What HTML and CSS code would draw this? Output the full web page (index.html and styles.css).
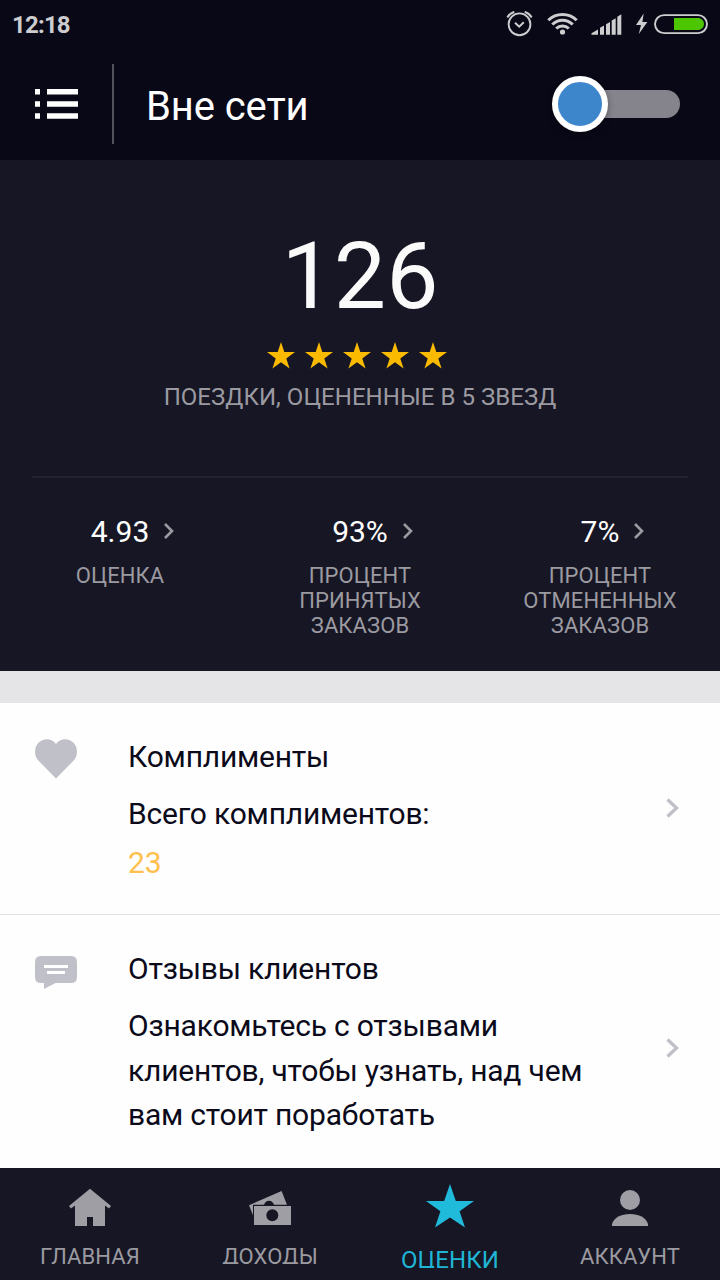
FILE: index.html
```html
<!DOCTYPE html>
<html lang="ru">
<head>
<meta charset="utf-8">
<title>Оценки</title>
<link rel="stylesheet" href="styles.css">
</head>
<body>
<div class="app">
  <div class="status">
    <span class="clock">12:18</span>
    <svg class="status-icons" width="206" height="48" viewBox="0 0 206 48">
      <g fill="none" stroke="#cdcdd0" stroke-linecap="round">
        <circle cx="19.5" cy="24.3" r="10.9" stroke-width="1.9"/>
        <path d="M15 22.800l4.200 3.900 4.600-4.400" stroke-width="2" stroke-linecap="butt"/>
        <path d="M7.900 16.600Q10 13.400 13.400 12.200M31.100 16.600Q29 13.400 25.600 12.200" stroke-width="2.200"/>
      </g>
      <g fill="none" stroke="#cdcdd0" stroke-width="3">
        <path d="M48.300 20.300a20 20 0 0 1 28.400 0"/>
        <path d="M52.300 24.500a14.300 14.300 0 0 1 20.400 0"/>
        <path d="M56.200 28.500a9 9 0 0 1 12.600 0"/>
      </g>
      <circle cx="62.500" cy="32" r="2.600" fill="#cdcdd0"/>
      <path d="M91.500 34.700v-1.500l6.500-3.600v5.100zM100 34.700v-6.900l4-2.200v9.100zM106 34.700V24.200l4-2.200v12.700zM111.700 34.700V20.500l4-2.200v16.400zM117.300 34.700V16.700l4-2.400v20.400z" fill="#cdcdd0"/>
      <path d="M143.700 13.600L136 25.100h5l-2.200 9L147.400 22h-5z" fill="#cdcdd0"/>
      <rect x="155" y="15.100" width="52" height="18" rx="9" fill="none" stroke="#cdcdd0" stroke-width="1.900"/>
      <path d="M174 18.100h25q5 1.400 5 6t-5 6h-25z" fill="#4bc600"/>
    </svg>
  </div>
  <header class="header">
    <div class="menu">
      <svg width="43" height="30" viewBox="0 0 43 30" fill="#fff"><path d="M0 0h5v5.500H0zM12 0h31v5.500H12zM0 12.200h5v5.500H0zM12 12.200h31v5.500H12zM0 24.200h5v5.500H0zM12 24.200h31v5.500H12z"/></svg>
    </div>
    <h1 class="title">Вне сети</h1>
    <div class="switch"><div class="knob"></div></div>
  </header>
  <section class="hero">
    <div class="score">126</div>
    <div class="stars">
      <svg viewBox="0 0 28 27"><path d="M14 0l3.300 10.100H28l-8.700 6.300 3.300 10.100L14 20.300l-8.600 6.200 3.300-10.100L0 10.100h10.700z"/></svg>
      <svg viewBox="0 0 28 27"><path d="M14 0l3.300 10.100H28l-8.700 6.300 3.300 10.100L14 20.300l-8.600 6.200 3.300-10.100L0 10.100h10.700z"/></svg>
      <svg viewBox="0 0 28 27"><path d="M14 0l3.300 10.100H28l-8.700 6.300 3.300 10.100L14 20.300l-8.600 6.200 3.300-10.100L0 10.100h10.700z"/></svg>
      <svg viewBox="0 0 28 27"><path d="M14 0l3.300 10.100H28l-8.700 6.300 3.300 10.100L14 20.300l-8.600 6.200 3.300-10.100L0 10.100h10.700z"/></svg>
      <svg viewBox="0 0 28 27"><path d="M14 0l3.300 10.100H28l-8.700 6.300 3.300 10.100L14 20.300l-8.600 6.200 3.300-10.100L0 10.100h10.700z"/></svg>
    </div>
    <div class="caption">ПОЕЗДКИ, ОЦЕНЕННЫЕ В 5 ЗВЕЗД</div>
    <div class="stats">
      <div class="stat">
        <div class="value">4.93<svg class="more" viewBox="0 0 10 16"><path d="M1 1l7 7-7 7"/></svg></div>
        <div class="label">ОЦЕНКА</div>
      </div>
      <div class="stat">
        <div class="value">93%<svg class="more" viewBox="0 0 10 16"><path d="M1 1l7 7-7 7"/></svg></div>
        <div class="label">ПРОЦЕНТ<br>ПРИНЯТЫХ<br>ЗАКАЗОВ</div>
      </div>
      <div class="stat">
        <div class="value">7%<svg class="more" viewBox="0 0 10 16"><path d="M1 1l7 7-7 7"/></svg></div>
        <div class="label">ПРОЦЕНТ<br>ОТМЕНЕННЫХ<br>ЗАКАЗОВ</div>
      </div>
    </div>
  </section>
  <main class="list">
    <article class="row compliments">
      <svg class="row-icon" width="42" height="40" viewBox="0 0 42 40"><path d="M21 39.500L3.600 21.800C-1 17-1.200 9 3.200 4 8-1.300 17-1.300 21 5c4-6.300 13-6.300 17.800-1 4.400 5 4.200 13-.400 17.800z" fill="#c0c0c8"/></svg>
      <div class="row-text">
        <h2>Комплименты</h2>
        <p>Всего комплиментов:</p>
        <p class="count">23</p>
      </div>
      <svg class="arrow" viewBox="0 0 13 20"><path d="M1.500 1.500L10.500 10l-9 8.500"/></svg>
    </article>
    <article class="row reviews">
      <svg class="row-icon" width="42" height="33" viewBox="0 0 42 33"><path d="M6 0h30q6 0 6 6v15q0 6-6 6H20.500L9 33v-6H6q-6 0-6-6V6q0-6 6-6z" fill="#c0c0c8"/><path d="M9 9h24v3H9zM12 15h18v3H12z" fill="#fff"/></svg>
      <div class="row-text">
        <h2>Отзывы клиентов</h2>
        <p>Ознакомьтесь с отзывами<br>клиентов, чтобы узнать, над чем<br>вам стоит поработать</p>
      </div>
      <svg class="arrow" viewBox="0 0 13 20"><path d="M1.500 1.500L10.500 10l-9 8.500"/></svg>
    </article>
  </main>
  <nav class="nav">
    <div class="tab">
      <svg viewBox="0 0 48 48"><path d="M24 4.800L45 22l-2 2.500-4-3V42H27v-9h-6v9H9V21.500l-4 3L3 22z"/></svg>
      <span>ГЛАВНАЯ</span>
    </div>
    <div class="tab income">
      <svg viewBox="0 0 48 48"><path d="M3 21.300L35.600 7l5.400 13.800H28q-1.500-4-5-4t-5 4H7v10.500z"/><path d="M8 22h37v19H8zM26.300 25.300a6 6 0 1 0 0 12 6 6 0 0 0 0-12z" fill-rule="evenodd"/></svg>
      <span>ДОХОДЫ</span>
    </div>
    <div class="tab active">
      <svg viewBox="0 0 48 48"><path d="M24 0l5.800 17H48L33.600 27.200 39 43.500 24 33.600 9 43.500l5.400-16.300L0 17h18.200z"/></svg>
      <span>ОЦЕНКИ</span>
    </div>
    <div class="tab">
      <svg viewBox="0 0 48 48"><circle cx="24" cy="16" r="10"/><path d="M6 42v-2C8 33.500 15 30 24 30s16 3.500 18 10v2z"/></svg>
      <span>АККАУНТ</span>
    </div>
  </nav>
</div>
</body>
</html>
```
FILE: styles.css
```css
* { box-sizing: border-box; margin: 0; padding: 0; }
body { font-family: Roboto, "Noto Sans", sans-serif; background: #fefefe; }
svg { display: block; flex: none; }
.app { width: 720px; height: 1280px; display: flex; flex-direction: column; overflow: hidden; }

.status { height: 48px; background: #090817; display: flex; justify-content: space-between; padding: 0 12px; }
.clock { font-size: 24px; font-weight: 700; line-height: 50px; letter-spacing: -0.8px; color: #cdcdd0; }
.status-icons { margin-right: 2px; overflow: visible; }

.header { height: 112px; background: #090817; display: flex; align-items: center; padding-right: 40px; }
.menu { width: 114px; height: 80px; border-right: 2px solid #53525d; display: flex; align-items: center; padding-left: 35px; }
.title { flex: 1; margin-left: 32px; padding-top: 6px; font-size: 40px; font-weight: 400; line-height: 48px; letter-spacing: -0.1px; color: #fff; }
.switch { width: 126px; height: 28px; border-radius: 14px; background: #85848d; display: flex; align-items: center; }
.knob { flex: none; width: 56px; height: 56px; margin-left: -2px; border-radius: 50%; border: 6px solid #fff; background: #3d86cb; box-shadow: 0 2px 6px rgba(0, 0, 0, .35); }

.hero { height: 511px; background: #171624; padding-top: 62px; text-align: center; }
.score { font-size: 93px; line-height: 110px; color: #fafafa; }
.stars { display: flex; justify-content: center; gap: 10px; padding: 9.500px 6px 0 0; }
.stars svg { width: 28px; height: 27px; fill: #f9ba00; }
.caption { margin-top: 14.500px; font-size: 24px; line-height: 28px; letter-spacing: 0.05px; color: #9b9aa1; }
.stats { margin: 65px 32px 0; border-top: 2px solid #242331; display: grid; grid-template-columns: 240px 240px 240px; justify-content: center; padding-top: 36px; }
.value { display: flex; align-items: center; justify-content: center; font-size: 30px; line-height: 36px; color: #fff; }
.more { width: 10px; height: 16px; margin: -2px -25px 0 15px; fill: none; stroke: #9b9aa1; stroke-width: 2.600; }
.label { margin-top: 13px; font-size: 22px; line-height: 25px; letter-spacing: 0.1px; color: #9b9aa1; }

.list { height: 497px; border-top: 32px solid #e5e5e7; overflow: hidden; }
.row { display: flex; align-items: flex-start; padding: 32px 41px 0 35px; font-size: 30px; line-height: 44.500px; letter-spacing: -0.2px; color: #0b0a1a; }
.compliments { height: 212px; border-bottom: 1px solid #e2e2e4; }
.reviews { height: 265px; }
.row-text { flex: 1; margin-left: 51px; }
.row h2 { font-size: 30px; font-weight: 400; margin-bottom: 12.500px; }
.row-icon { margin-top: 4px; }
.reviews .row-icon { margin-top: 9px; }
.count { margin-top: 4.500px; color: #ffc04d; }
.arrow { width: 13px; height: 20px; margin-top: 63px; fill: none; stroke: #c0c0c8; stroke-width: 3.400; }
.reviews .arrow { margin-top: 91px; }

.nav { height: 112px; background: #171624; display: grid; grid-template-columns: repeat(4, 180px); }
.tab { display: flex; flex-direction: column; align-items: center; padding-top: 16px; color: #9b9aa1; }
.tab svg { width: 48px; height: 48px; fill: #9f9ea4; }
.tab span { margin-top: 8px; font-size: 22px; line-height: 34px; letter-spacing: 0.1px; }
.income span { height: 24px; overflow: hidden; }
.tab.active { color: #1fb5d4; }
.tab.active svg { fill: #20bbdb; }
.tab.active span { height: 28px; font-size: 24px; line-height: 41px; overflow: hidden; }
```
